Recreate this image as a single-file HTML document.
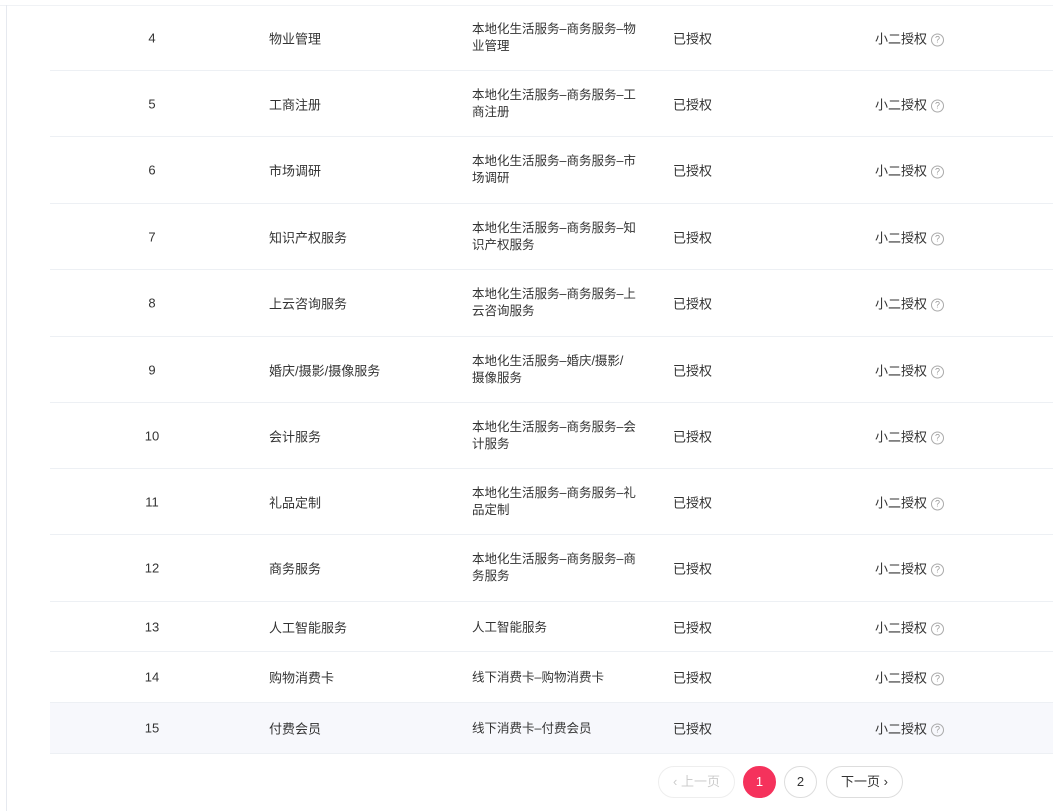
<!DOCTYPE html><html><head><meta charset="utf-8"><style>
body{margin:0;width:1053px;height:811px;background:#fff;position:relative;overflow:hidden;font-family:"Liberation Sans","Noto Sans CJK SC",sans-serif;color:#333;font-size:13px}
.vl{position:absolute;left:6px;top:5px;width:1px;height:806px;background:#e6e9ef}
.tl{position:absolute;left:0;top:5px;width:1053px;height:1px;background:#f0f2f5}
.r{position:absolute;left:50px;width:1003px;border-bottom:1px solid #edf0f4;box-sizing:border-box}
.r div{position:absolute;top:50%;transform:translateY(-50%)}
.n{left:90px;width:24px;text-align:center}
.a{left:219px}
.c{left:422px;width:172px;font-size:12.5px;line-height:17px}
.c1{margin-top:1px}
.s{left:623px}
.q{left:825px}
.q i{display:inline-block;width:11px;height:11px;border:1px solid #aaa;border-radius:50%;font-size:9px;line-height:11px;text-align:center;color:#999;font-style:normal;margin-left:4px;vertical-align:1px}
.hl{background:#f7f8fc}
.pg{position:absolute;top:766px;height:32px;box-sizing:border-box;border:1px solid #ddd;border-radius:16px;text-align:center;line-height:30px;font-size:13px}
</style></head><body>
<div class="tl"></div><div class="vl"></div>
<div class="r" style="top:5px;height:66px"><div class="n">4</div><div class="a">物业管理</div><div class="c">本地化生活服务–商务服务–物业管理</div><div class="s">已授权</div><div class="q">小二授权<i>?</i></div></div>
<div class="r" style="top:71px;height:66px"><div class="n">5</div><div class="a">工商注册</div><div class="c">本地化生活服务–商务服务–工商注册</div><div class="s">已授权</div><div class="q">小二授权<i>?</i></div></div>
<div class="r" style="top:137px;height:67px"><div class="n">6</div><div class="a">市场调研</div><div class="c">本地化生活服务–商务服务–市场调研</div><div class="s">已授权</div><div class="q">小二授权<i>?</i></div></div>
<div class="r" style="top:204px;height:66px"><div class="n">7</div><div class="a">知识产权服务</div><div class="c">本地化生活服务–商务服务–知识产权服务</div><div class="s">已授权</div><div class="q">小二授权<i>?</i></div></div>
<div class="r" style="top:270px;height:67px"><div class="n">8</div><div class="a">上云咨询服务</div><div class="c">本地化生活服务–商务服务–上云咨询服务</div><div class="s">已授权</div><div class="q">小二授权<i>?</i></div></div>
<div class="r" style="top:337px;height:66px"><div class="n">9</div><div class="a">婚庆/摄影/摄像服务</div><div class="c">本地化生活服务–婚庆/摄影/<br>摄像服务</div><div class="s">已授权</div><div class="q">小二授权<i>?</i></div></div>
<div class="r" style="top:403px;height:66px"><div class="n">10</div><div class="a">会计服务</div><div class="c">本地化生活服务–商务服务–会计服务</div><div class="s">已授权</div><div class="q">小二授权<i>?</i></div></div>
<div class="r" style="top:469px;height:66px"><div class="n">11</div><div class="a">礼品定制</div><div class="c">本地化生活服务–商务服务–礼品定制</div><div class="s">已授权</div><div class="q">小二授权<i>?</i></div></div>
<div class="r" style="top:535px;height:67px"><div class="n">12</div><div class="a">商务服务</div><div class="c">本地化生活服务–商务服务–商务服务</div><div class="s">已授权</div><div class="q">小二授权<i>?</i></div></div>
<div class="r" style="top:602px;height:50px"><div class="n">13</div><div class="a">人工智能服务</div><div class="c c1">人工智能服务</div><div class="s">已授权</div><div class="q">小二授权<i>?</i></div></div>
<div class="r" style="top:652px;height:51px"><div class="n">14</div><div class="a">购物消费卡</div><div class="c c1">线下消费卡–购物消费卡</div><div class="s">已授权</div><div class="q">小二授权<i>?</i></div></div>
<div class="r hl" style="top:703px;height:51px"><div class="n">15</div><div class="a">付费会员</div><div class="c c1">线下消费卡–付费会员</div><div class="s">已授权</div><div class="q">小二授权<i>?</i></div></div>
<div class="pg" style="left:658px;width:77px;color:#ccc;border-color:#eee">‹ 上一页</div>
<div class="pg" style="left:743px;width:33px;background:#f5325c;border-color:#f5325c;color:#fff">1</div>
<div class="pg" style="left:784px;width:33px">2</div>
<div class="pg" style="left:826px;width:77px">下一页 ›</div>
</body></html>
